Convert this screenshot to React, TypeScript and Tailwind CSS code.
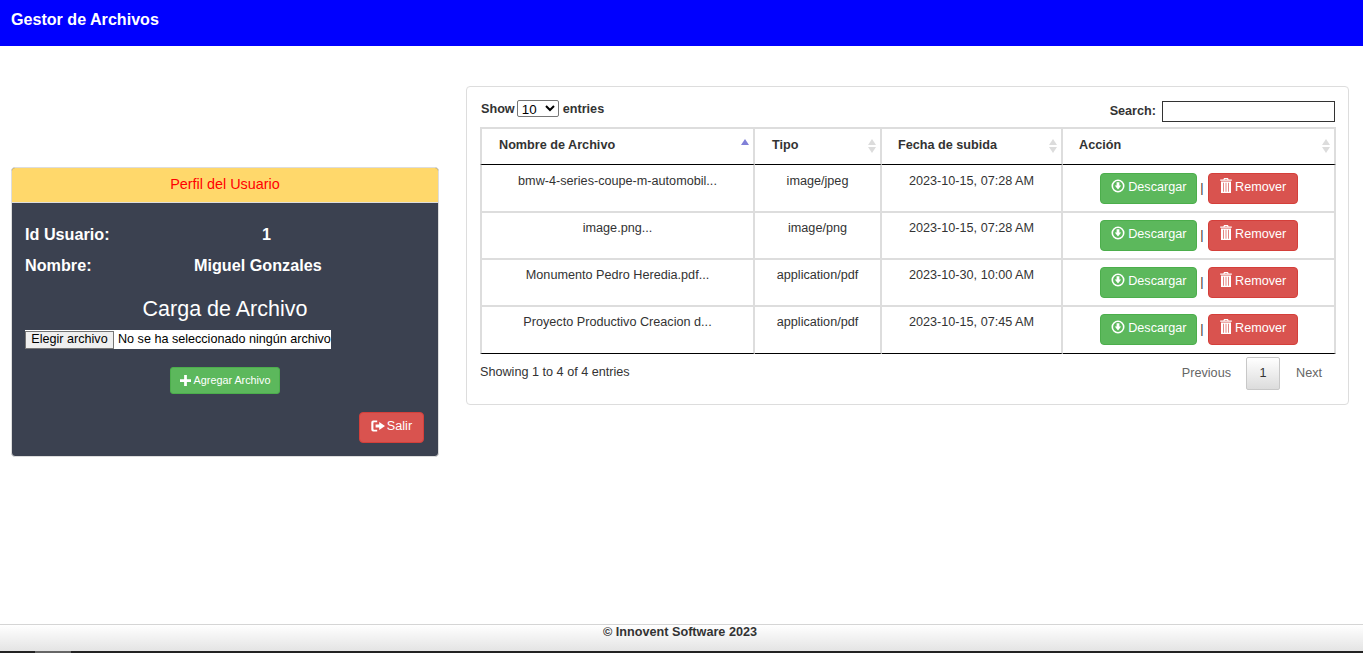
import { useState } from "react";

const archivos = [
  { nombre: "bmw-4-series-coupe-m-automobil...", tipo: "image/jpeg", fecha: "2023-10-15, 07:28 AM" },
  { nombre: "image.png...", tipo: "image/png", fecha: "2023-10-15, 07:28 AM" },
  { nombre: "Monumento Pedro Heredia.pdf...", tipo: "application/pdf", fecha: "2023-10-30, 10:00 AM" },
  { nombre: "Proyecto Productivo Creacion d...", tipo: "application/pdf", fecha: "2023-10-15, 07:45 AM" },
];

const IconDownload = () => (
  <svg viewBox="0 0 14 14" className="w-[14px] h-[14px] mt-[-2px]" fill="currentColor">
    <path fillRule="evenodd" d="M7 .5a6.5 6.5 0 1 1 0 13 6.5 6.5 0 0 1 0-13Zm0 1.6a4.9 4.9 0 1 0 0 9.8 4.9 4.9 0 0 0 0-9.800Z" />
    <path d="M5.600 3.200h2.800v3.400h1.800L7 10.400 3.800 6.600h1.800z" />
  </svg>
);

const IconTrash = () => (
  <svg viewBox="0 0 14 15" className="w-[14px] h-[15px] mt-[-3px]" fill="currentColor">
    <path d="M5 0h4l.6 1.500h3.200v1.300H1.200V1.500h3.200zM5.800 1 5.600 1.500h2.800L8.200 1z" fillRule="evenodd" />
    <path d="M2 3.600h10V15H2zM4.200 4.800v9h.7v-9zm2.450 0v9h.7v-9zm2.450 0v9h.7v-9z" fillRule="evenodd" />
  </svg>
);

const IconPlus = () => (
  <svg viewBox="0 0 12 12" className="w-[11px] h-[11px]" fill="currentColor">
    <path d="M4.500 0h3v4.500H12v3H7.500V12h-3V7.500H0v-3h4.500z" />
  </svg>
);

const IconSalir = () => (
  <svg viewBox="0 0 14 14" className="w-[14px] h-[14px]" fill="currentColor">
    <path d="M2.200 1.500h4v1.800H3a.6.6 0 0 0-.6.6v6.200c0 .3.3.6.6.6h3.200v1.800h-4A2 2 0 0 1 .3 10.500v-7a2 2 0 0 1 1.900-2Z" />
    <path d="M8.200 3 14 7l-5.800 4V8.600H4.600V5.400h3.600z" />
  </svg>
);

const SortIcon = ({ active }: { active?: boolean }) => (
  <span className="absolute right-[4px] top-[10px] flex flex-col gap-[2px]">
    <span className={`w-0 h-0 border-x-[4px] border-x-transparent border-b-[6px] ${active ? "border-b-[#8080d8]" : "border-b-[#dcdcdc]"}`} />
    {!active && <span className="w-0 h-0 border-x-[4px] border-x-transparent border-t-[6px] border-t-[#dcdcdc]" />}
  </span>
);

export default function App() {
  const [buscador, setBuscador] = useState("");

  return (
    <div className="h-[653px] flex flex-col bg-white text-[12.65px] text-[#333] font-['Liberation_Sans',Arial,sans-serif]">
      <header className="h-[46px] shrink-0 bg-[#0000ff] px-[11px] pt-[9px]">
        <h1 className="text-white font-bold text-[16.1px] leading-[20px]">Gestor de Archivos</h1>
      </header>

      <main className="flex-1 flex items-start pl-[11px] pr-[15px]">
        {/* Perfil */}
        <section className="w-[428px] h-[290px] mt-[121px] shrink-0 border border-[#ddd] rounded-[4px] bg-[#3b4150] overflow-hidden">
          <div className="h-[35px] bg-[#ffd86b] border-b border-[#ddd] text-center text-[#ff0000] text-[14.4px] leading-[33px]">
            Perfil del Usuario
          </div>
          <div className="px-[13px] text-white">
            <div className="grid grid-cols-[169px_1fr] font-bold text-[16.2px] leading-[20px] mt-[21px]">
              <span>Id Usuario:</span>
              <span className="pl-[68px]">1</span>
            </div>
            <div className="grid grid-cols-[169px_1fr] font-bold text-[16.2px] leading-[20px] mt-[11px]">
              <span>Nombre:</span>
              <span>Miguel Gonzales</span>
            </div>
            <h2 className="text-center text-[21.5px] leading-[26px] mt-[21px]">Carga de Archivo</h2>
            <div className="mt-[8px] w-[306px] h-[19px] bg-white text-black text-[12.6px] flex items-center overflow-hidden whitespace-nowrap">
              <button className="h-[18px] w-[89px] shrink-0 bg-[#efefef] border border-[#767676] text-center leading-[15px]">
                Elegir archivo
              </button>
              <span className="pl-[4px]">No se ha seleccionado ningún archivo</span>
            </div>
            <div className="flex justify-center mt-[18px]">
              <button className="w-[110px] h-[27px] bg-[#5cb85c] border border-[#4cae4c] rounded-[3px] text-white text-[10.8px] flex items-center justify-center gap-[3px]">
                <IconPlus />
                Agregar Archivo
              </button>
            </div>
            <div className="flex justify-end mt-[18px] mr-[1px]">
              <button className="w-[65px] h-[31px] bg-[#d9534f] border border-[#d43f3a] rounded-[4px] text-white flex items-center justify-center gap-[2px] pb-[3px]">
                <IconSalir />
                Salir
              </button>
            </div>
          </div>
        </section>

        {/* Tabla */}
        <section className="ml-[27px] mt-[40px] flex-1 h-[319px] border border-[#ddd] rounded-[4px] pl-[13px] pr-[12px] pt-[14px]">
          <div className="flex justify-between items-start h-[26px] pr-[1px]">
            <label className="font-bold flex items-center gap-[2px] leading-[16px] ml-[1px] mt-[-1px]">
              Show
              <select className="w-[42px] h-[17px] border border-[#767676] rounded-[2px] text-[13.33px] text-black font-normal bg-white">
                <option>10</option>
              </select>
              <span className="ml-[2px]">entries</span>
            </label>
            <label className="font-bold flex items-center gap-[6px]">
              Search:
              <input
                value={buscador}
                onChange={(e) => setBuscador(e.target.value)}
                className="w-[173px] h-[21px] border border-[#333] outline-none"
              />
            </label>
          </div>
          <table className="w-[856px] border-separate border-spacing-0 table-fixed">
            <thead>
              <tr className="text-left font-bold">
                <th className="relative w-[275px] h-[38px] pl-[17px] pb-[2px] font-bold border-t-2 border-t-[#ddd] border-l-2 border-l-[#ddd] border-r-2 border-r-[#ddd] border-b border-b-black">Nombre de Archivo<SortIcon active /></th>
                <th className="relative w-[127px] h-[38px] pl-[17px] pb-[2px] font-bold border-t-2 border-t-[#ddd] border-r-2 border-r-[#ddd] border-b border-b-black">Tipo<SortIcon /></th>
                <th className="relative w-[181px] h-[38px] pl-[16px] pb-[2px] font-bold border-t-2 border-t-[#ddd] border-r-2 border-r-[#ddd] border-b border-b-black">Fecha de subida<SortIcon /></th>
                <th className="relative h-[38px] pl-[16px] pb-[2px] font-bold border-t-2 border-t-[#ddd] border-r-2 border-r-[#ddd] border-b border-b-black">Acción<SortIcon /></th>
              </tr>
            </thead>
            <tbody>
              {archivos.map((archivo, key) => {
                const borde = key === 3 ? "border-b border-b-black" : "border-b-2 border-b-[#ddd]";
                const alto = key === 0 ? "h-[48px] pt-[7px]" : "h-[47px] pt-[6px]";
                return (
                  <tr key={key} className="text-center align-top">
                    <td className={`${alto} border-l-2 border-l-[#ddd] border-r-2 border-r-[#ddd] ${borde}`}>{archivo.nombre}</td>
                    <td className={`${alto} border-r-2 border-r-[#ddd] ${borde}`}>{archivo.tipo}</td>
                    <td className={`${alto} border-r-2 border-r-[#ddd] ${borde}`}>{archivo.fecha}</td>
                    <td className={`${key === 0 ? "h-[48px] pt-[8px]" : "h-[47px] pt-[7px]"} pl-[1px] border-r-2 border-r-[#ddd] ${borde}`}>
                      <div className="flex justify-center items-center gap-[4px]">
                        <button className="w-[97px] h-[31px] mr-[-1px] bg-[#5cb85c] border border-[#4cae4c] rounded-[4px] text-white flex items-center justify-center gap-[3px] pb-[3px]">
                          <IconDownload />
                          Descargar
                        </button>
                        <span>|</span>
                        <button className="w-[90px] h-[31px] bg-[#d9534f] border border-[#d43f3a] rounded-[4px] text-white flex items-center justify-center gap-[2px] pb-[3px]">
                          <IconTrash />
                          Remover
                        </button>
                      </div>
                    </td>
                  </tr>
                );
              })}
            </tbody>
          </table>
          <div className="flex justify-between items-start mt-[3px]">
            <span className="pt-[5px] leading-[20px]">Showing 1 to 4 of 4 entries</span>
            <div className="flex items-center text-[#666]">
              <span className="px-[15px]">Previous</span>
              <span className="w-[34px] h-[33px] border border-[#c8c8c8] rounded-[2px] bg-gradient-to-b from-white to-[#dcdcdc] text-[#333] flex items-center justify-center">1</span>
              <span className="pl-[16px] pr-[14px]">Next</span>
            </div>
          </div>
        </section>
      </main>

      <footer className="relative h-[29px] shrink-0 border-t border-[#d5d5d5] border-b-2 border-b-[#222] bg-gradient-to-b from-white to-[#e4e4e4] text-center">
        <p className="font-bold text-[12.65px] leading-[15px] pr-[3px]">© Innovent Software 2023</p>
        <span className="absolute left-[35px] bottom-[-2px] w-[36px] h-[2px] bg-[#666]" />
      </footer>
    </div>
  );
}
